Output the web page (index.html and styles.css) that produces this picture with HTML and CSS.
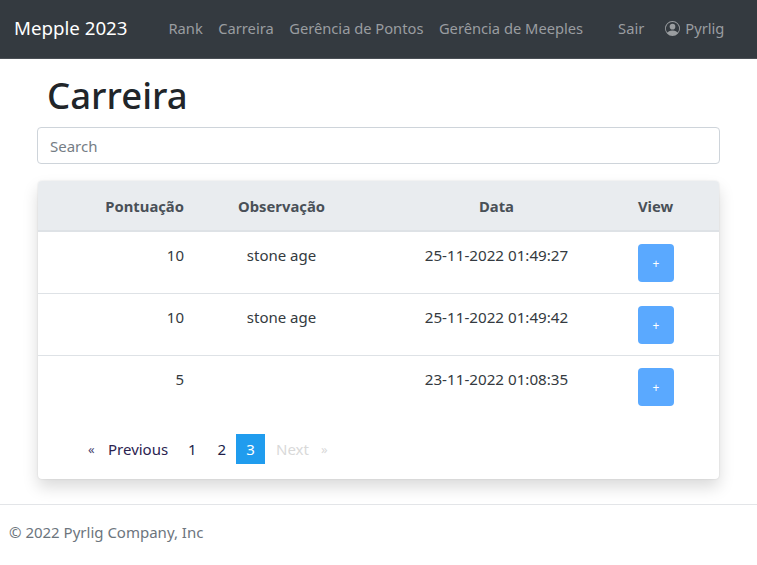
FILE: index.html
```html
<!DOCTYPE html>
<html lang="pt">
<head>
<meta charset="utf-8">
<title>Carreira</title>
<link rel="stylesheet" href="styles.css">
</head>
<body>
<nav class="navbar">
  <a class="brand" href="#">Mepple 2023</a>
  <ul class="nav-main">
    <li><a href="#">Rank</a></li>
    <li><a href="#">Carreira</a></li>
    <li><a href="#">Gerência de Pontos</a></li>
    <li><a href="#">Gerência de Meeples</a></li>
  </ul>
  <ul class="nav-user">
    <li><a href="#">Sair</a></li>
    <li><a href="#" class="user-link"><svg class="user-icon" viewBox="0 0 16 16" width="16" height="16" fill="currentColor"><path d="M11 6a3 3 0 1 1-6 0 3 3 0 0 1 6 0z"/><path fill-rule="evenodd" d="M0 8a8 8 0 1 1 16 0A8 8 0 0 1 0 8zm8-7a7 7 0 0 0-5.468 11.37C3.242 11.226 4.805 10 8 10s4.757 1.225 5.468 2.37A7 7 0 0 0 8 1z"/></svg>Pyrlig</a></li>
  </ul>
</nav>
<main class="content">
  <h1 class="title">Carreira</h1>
  <input class="search" type="text" placeholder="Search">
  <section class="card">
    <table class="table">
      <colgroup>
        <col class="col-score"><col class="col-note"><col class="col-date"><col class="col-view">
      </colgroup>
      <thead>
        <tr>
          <th class="right">Pontuação</th>
          <th class="center">Observação</th>
          <th class="center">Data</th>
          <th>View</th>
        </tr>
      </thead>
      <tbody>
        <tr>
          <td class="right">10</td>
          <td class="center">stone age</td>
          <td class="center date">25-11-2022 01:49:27</td>
          <td><button class="btn-view">+</button></td>
        </tr>
        <tr>
          <td class="right">10</td>
          <td class="center">stone age</td>
          <td class="center date">25-11-2022 01:49:42</td>
          <td><button class="btn-view">+</button></td>
        </tr>
        <tr>
          <td class="right">5</td>
          <td class="center"></td>
          <td class="center date">23-11-2022 01:08:35</td>
          <td><button class="btn-view">+</button></td>
        </tr>
      </tbody>
    </table>
    <ul class="pagination">
      <li class="arrow arrow-prev">«</li>
      <li class="page page-prev">Previous</li>
      <li class="page page-num">1</li>
      <li class="page page-num">2</li>
      <li class="page page-current">3</li>
      <li class="page page-next">Next</li>
      <li class="arrow arrow-next">»</li>
    </ul>
  </section>
</main>
<footer class="footer">© 2022 Pyrlig Company, Inc</footer>
</body>
</html>
```
FILE: styles.css
```css
* { box-sizing: border-box; }
html, body { margin: 0; padding: 0; }
body {
  font-family: "Noto Sans", "Open Sans", sans-serif;
  font-size: 15px;
  line-height: 24px;
  color: #212529;
  background: #fff;
  width: 757px;
  height: 565px;
  overflow: hidden;
}
a { text-decoration: none; color: inherit; }
ul { list-style: none; margin: 0; padding: 0; }

.navbar {
  display: flex;
  align-items: center;
  height: 59px;
  background: #343a40;
  padding: 0 14px 2px;
  border-bottom: 1px solid #4a4f55;
}
.brand { color: #fff; font-size: 18.7px; margin-right: 41px; }
.nav-main, .nav-user { display: flex; color: #9a9da0; font-size: 14.7px; }
.nav-main { gap: 15.5px; }
.nav-user { gap: 21px; margin-left: 35px; }
.user-link { display: flex; align-items: center; }
.user-icon { width: 15px; height: 15px; margin-right: 5px; }

.content { padding: 0 37px; }
.title { margin: 12px 0 7px 10px; font-size: 36.5px; line-height: 49px; font-weight: 500; }
.search {
  display: block;
  width: 683px;
  height: 37px;
  padding: 0 12px;
  font: inherit;
  border: 1px solid #ced4da;
  border-radius: 4px;
  color: #495057;
}
.search::placeholder { color: #757d85; opacity: 1; }

.card {
  margin-top: 17px;
  margin-left: 1px;
  width: 681px;
  height: 298px;
  border-radius: 4px;
  background: #fff;
  box-shadow: 0 8px 16px rgba(0, 0, 0, .15), 0 0 2px rgba(0, 0, 0, .12);
  overflow: hidden;
}
.table { width: 100%; border-collapse: collapse; table-layout: fixed; }
.col-score { width: 158px; }
.col-note { width: 171px; }
.col-date { width: 259px; }
.col-view { width: 93px; }
.table th, .table td { text-align: left; }
.table th {
  height: 50px;
  padding: 12px;
  background: #e9ecef;
  color: #495057;
  font-weight: 700;
  border-bottom: 2px solid #dee2e6;
  font-size: 14.8px;
}
.table td {
  height: 62px;
  padding: 11px 12px;
  vertical-align: top;
  color: #343a40;
  border-bottom: 1px solid #dee2e6;
}
.table tr:last-child td { border-bottom: 0; }
.table .right { text-align: right; }
.table .center { text-align: center; }
.table .date { font-size: 15.2px; }
.btn-view {
  display: block;
  width: 36px;
  height: 38px;
  margin-top: 1px;
  padding: 2px 0 0;
  border: 0;
  border-radius: 4px;
  background: #5aa9ff;
  color: #fff;
  font: inherit;
  font-size: 12px;
}

.pagination { display: flex; align-items: center; height: 30px; margin-top: 16px; padding-left: 50px; }
.arrow { font-size: 13px; }
.arrow-prev { color: #4a4570; width: 20px; }
.page-prev { color: #2b2350; width: 69px; }
.page-num { color: #221f4a; width: 29.5px; padding-left: 11px; }
.page-current {
  width: 29px;
  height: 30px;
  background: #209cee;
  color: #fff;
  text-align: center;
  line-height: 30px;
}
.page-next { color: #d9d9d9; width: 56px; padding-left: 11px; }
.arrow-next { color: #d9d9d9; }

.footer {
  margin-top: 25px;
  height: 60px;
  border-top: 1px solid #e3e5e8;
  padding: 15px 9px;
  color: #6c757d;
  font-size: 15px;
}
```
